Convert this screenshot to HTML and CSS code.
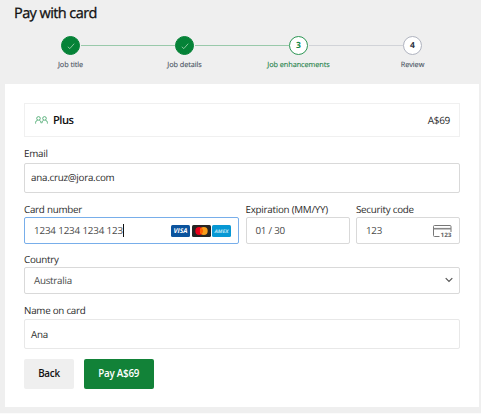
FILE: index.html
```html
<!DOCTYPE html>
<html lang="en">
<head>
<meta charset="utf-8">
<title>Pay with card</title>
<link rel="stylesheet" href="styles.css">
</head>
<body>
<main class="page">
  <h1 class="title">Pay with card</h1>
  <ol class="steps">
    <li class="step done"><span class="dot"><svg width="10" height="10" viewBox="0 0 10 10"><path d="M1.8 5.8 3.8 7.6 8.2 2.7"/></svg></span><span class="name">Job title</span></li>
    <li class="step done"><span class="dot"><svg width="10" height="10" viewBox="0 0 10 10"><path d="M1.8 5.8 3.8 7.6 8.2 2.7"/></svg></span><span class="name">Job details</span></li>
    <li class="step current"><span class="dot">3</span><span class="name">Job enhancements</span></li>
    <li class="step"><span class="dot">4</span><span class="name">Review</span></li>
  </ol>
  <section class="card">
    <div class="plan">
      <svg class="people" width="13" height="8" viewBox="0 0 13 8"><circle cx="3.5" cy="2.4" r="1.8"/><circle cx="9.5" cy="2.4" r="1.8"/><path d="M.6 7.6V6.4Q.6 4.6 2.6 4.3M4.4 4.3Q6.1 4.6 6.1 7.2M6.9 7.2Q6.9 4.6 8.6 4.3M10.4 4.3Q12.4 4.6 12.4 6.4V7.6"/></svg>
      <strong class="plan-name">Plus</strong>
      <span class="price">A$69</span>
    </div>
    <div class="field email">
      <span class="label">Email</span>
      <div class="input tall">ana.cruz@jora.com</div>
    </div>
    <div class="row">
      <div class="field">
        <span class="label">Card number</span>
        <div class="input stripe focus"><span class="number">1234 1234 1234 123</span><i class="caret"></i>
          <span class="brands">
            <svg width="19" height="12" viewBox="0 0 19 12"><rect width="19" height="12" rx="1.5" fill="#0b539d"/><text class="visa" x="9.5" y="8.4" textLength="14" lengthAdjust="spacingAndGlyphs">VISA</text></svg>
            <svg width="19" height="12" viewBox="0 0 19 12"><rect width="19" height="12" rx="1.5" fill="#252525"/><circle cx="7.2" cy="6" r="3.9" fill="#eb001b"/><circle cx="11.8" cy="6" r="3.9" fill="#f79e1b"/><path d="M9.5 2.85a3.9 3.9 0 0 1 0 6.3 3.9 3.9 0 0 1 0-6.3" fill="#ff5f00"/></svg>
            <svg width="19" height="12" viewBox="0 0 19 12"><rect width="19" height="12" rx="1.5" fill="#0798d4"/><text class="amex" x="9.5" y="7.8" textLength="14" lengthAdjust="spacingAndGlyphs">AMEX</text></svg>
          </span>
        </div>
      </div>
      <div class="field">
        <span class="label">Expiration (MM/YY)</span>
        <div class="input stripe">01 / 30</div>
      </div>
      <div class="field">
        <span class="label">Security code</span>
        <div class="input stripe">123
          <svg class="cvc" width="19" height="14" viewBox="0 0 19 14"><path d="M6.5 12.5H1.5Q.5 12.500 .5 11.500V2.500Q.5 1.500 1.500 1.500h15.500q1 0 1 1v5.500" fill="none" stroke="#777"/><path d="M.5 4.700h17.500" stroke="#888" stroke-width="1.600"/><text x="7.500" y="13.300" textLength="11" lengthAdjust="spacingAndGlyphs">123</text></svg>
        </div>
      </div>
    </div>
    <div class="field country">
      <span class="label">Country</span>
      <div class="input stripe">Australia
        <svg class="chevron" width="8" height="6" viewBox="0 0 8 6"><path d="M.7 1.2 4 4.5 7.3 1.2"/></svg>
      </div>
    </div>
    <div class="field holder">
      <span class="label">Name on card</span>
      <div class="input tall">Ana</div>
    </div>
    <div class="actions">
      <button class="btn back">Back</button>
      <button class="btn pay">Pay A$69</button>
    </div>
  </section>
</main>
</body>
</html>
```
FILE: styles.css
```css
* { box-sizing: border-box; }
html { background: #fbfbfb; }
body {
  margin: 0;
  width: 481px;
  height: 413px;
  overflow: hidden;
  background: #fbfbfb;
  font-family: "Open Sans", "Noto Sans", sans-serif;
  font-size: 10px;
  color: #2c2c2c;
  text-rendering: geometricPrecision;
}
.page { height: 413px; padding: 3px 2px 0 5px; background: #efefef; }
.title {
  margin: 0 0 0 9px;
  height: 33px;
  font-size: 14.5px;
  line-height: 21px;
  font-weight: 400;
  letter-spacing: -0.58px;
  color: #111;
  -webkit-text-stroke: 0.3px #111;
}
.steps {
  display: grid;
  grid-template-columns: repeat(4, 114px);
  width: 456px;
  height: 47.5px;
  margin: 0 0 0 8.5px;
  padding: 0;
  list-style: none;
}
.step { display: flex; flex-direction: column; align-items: center; position: relative; color: #4b5563; }
.step + .step::before {
  content: "";
  position: absolute;
  left: -47px;
  top: 9px;
  width: 94px;
  height: 1px;
  background: #d1d3d8;
}
.step.done + .step::before { background: #99c9aa; }
.step.done + .step.current::before { background: #99c9aa; }
.dot {
  display: flex;
  align-items: center;
  justify-content: center;
  width: 19px;
  height: 19px;
  border: 1px solid #b0b4c0;
  border-radius: 50%;
  background: #fff;
  font-size: 8.5px;
  font-weight: 700;
  color: #303545;
}
.dot svg { fill: none; stroke: #a9d8b5; stroke-width: 0.8; }
.done .dot { background: #058237; border-color: #058237; }
.current .dot { border-color: #2c9654; color: #158744; }
.name { margin-top: 4px; font-size: 7.3px; line-height: 12px; letter-spacing: -0.06px; white-space: nowrap; -webkit-text-stroke: 0.12px currentColor; }
.current .name { color: #1c8148; }
.card { height: 323.5px; padding: 19px 19px 0; background: #fff; }
.plan {
  display: flex;
  align-items: center;
  height: 34px;
  padding: 0 9px 0 10px;
  border: 1px solid #f0f0f0;
}
.people { fill: none; stroke: #3aa162; stroke-width: 0.8; }
.plan-name { margin: 1px 0 0 5px; font-size: 11.2px; font-weight: 600; letter-spacing: -0.55px; color: #111; }
.price { margin-left: auto; font-size: 10px; letter-spacing: -0.3px; }
.field { display: flex; flex-direction: column; }
.label { height: 16px; font-size: 9.8px; line-height: 17px; letter-spacing: -0.25px; white-space: nowrap; }
.email { margin-top: 9px; }
.email .label { height: 17px; line-height: 16px; }
.input {
  display: flex;
  align-items: center;
  position: relative;
  border: 1px solid #d9d9d9;
  border-radius: 2px;
  font-size: 9.8px;
  letter-spacing: -0.25px;
  white-space: nowrap;
}
.tall { height: 30px; padding: 0 6px; }
.stripe { height: 27px; padding: 0 9px; color: #4a4a4a; }
.number { letter-spacing: -0.15px; }
.focus { border-color: #78aeea; }
.row { display: grid; grid-template-columns: 215px 104px 104px; column-gap: 6.5px; margin-top: 8.5px; }
.caret { width: 1px; height: 13px; background: #111; }
.brands { display: flex; gap: 1.5px; margin-left: auto; margin-right: -2px; }
.visa, .amex { text-anchor: middle; fill: #fff; font: italic 700 6.5px "Open Sans", sans-serif; letter-spacing: 0; }
.amex { font-size: 5px; fill: #b9e5f5; }
.cvc { margin-left: auto; margin-right: -2px; }
.cvc text { font: 700 6px "Open Sans", sans-serif; letter-spacing: 0; fill: #666; }
.country { margin-top: 6.5px; }
.country .input { height: 27px; }
.chevron { margin-left: auto; margin-right: -3px; fill: none; stroke: #555; stroke-width: 1.2; }
.holder { margin-top: 8.5px; }
.holder .label { height: 17px; }
.holder .input { border-color: #e8e8e8; }
.actions { display: flex; gap: 9.5px; margin-top: 10px; }
.btn {
  height: 29.5px;
  padding: 0;
  border: 0;
  border-radius: 2px;
  font: 600 9.8px "Open Sans", "Noto Sans", sans-serif;
  letter-spacing: -0.22px;
}
.back { width: 50px; background: #efefef; color: #111; }
.pay { width: 70.5px; background: #128238; color: #fff; }
```
